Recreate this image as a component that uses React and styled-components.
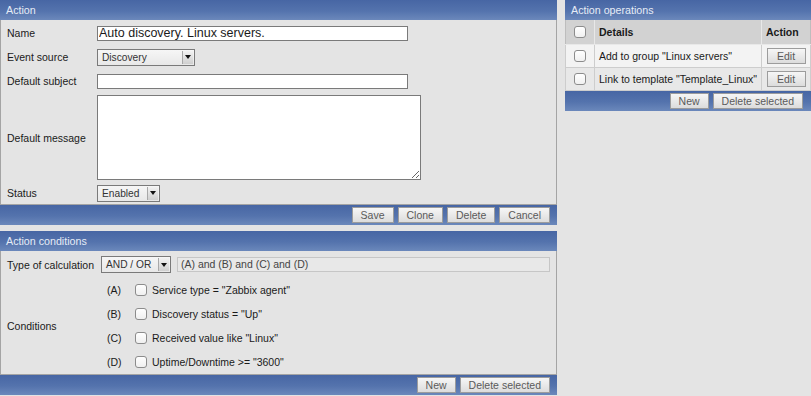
import React from 'react'
import styled, { createGlobalStyle } from 'styled-components'

const GlobalStyle = createGlobalStyle`
  html, body {
    margin: 0;
    padding: 0;
    background: #e4e4e4;
    font-family: "Liberation Sans", Arial, sans-serif;
    font-size: 10.5px;
    color: #1a1a1a;
  }
`

const Page = styled.div`
  display: flex;
  align-items: flex-start;
  gap: 8px;
  width: 811px;
`

const Column = styled.div`
  display: flex;
  flex-direction: column;
  gap: 6px;
  width: ${p => p.width}px;
`

const Panel = styled.div`
  display: flex;
  flex-direction: column;
`

const blueBar = `
  background: linear-gradient(to bottom, #4766a4 0%, #5473ad 55%, #6b88bb 100%);
`

const PanelHeader = styled.div`
  ${blueBar}
  height: 20px;
  line-height: 20px;
  padding-left: 6px;
  color: #e6ecf6;
  font-size: 10.7px;
`

const PanelBody = styled.div`
  background: #e4e4e4;
  border: 1px solid #a4a4a4;
  border-top: none;
  padding-top: ${p => p.pt || 0}px;
`

const PanelFooter = styled.div`
  ${blueBar}
  height: 20px;
  display: flex;
  justify-content: flex-end;
  align-items: center;
  gap: 4px;
  padding-right: ${p => p.pr || 7}px;
`

const Button = styled.button`
  height: 16px;
  padding: 0 8px;
  border: 1px solid #9c9c9c;
  background: linear-gradient(to bottom, #f6f6f6, #dcdcdc);
  color: #5a5a5a;
  font-family: inherit;
  font-size: 10.5px;
  line-height: 14px;
  cursor: pointer;
`

const FormRow = styled.div`
  display: grid;
  grid-template-columns: ${p => p.label}px 1fr;
  align-items: center;
  height: ${p => p.h}px;
  padding-left: 6px;
`

const Label = styled.span`
  font-size: 10.5px;
  white-space: nowrap;
`

const TextInput = styled.input`
  box-sizing: border-box;
  width: ${p => p.w}px;
  height: 15px;
  border: 1px solid #7a7a7a;
  background: #fff;
  padding: 0 1px;
  font-family: inherit;
  font-size: 12.5px;
  color: #1a1a1a;
  outline: none;
`

const TextArea = styled.textarea`
  box-sizing: border-box;
  width: 324px;
  height: 85px;
  border: 1px solid #7a7a7a;
  background: #fff;
  margin: 0;
  display: block;
  font-family: inherit;
  font-size: 12px;
  outline: none;
`

const SelectBox = styled.div`
  box-sizing: border-box;
  width: ${p => p.w}px;
  height: 17px;
  border: 1px solid #7a7a7a;
  background: linear-gradient(to bottom, #f6f6f6, #e8e8e8);
  display: flex;
  align-items: center;
  justify-content: space-between;
  padding-left: 4px;
  color: #333;
  font-size: 10.2px;
`

const Arrow = styled.span`
  width: 10px;
  height: 13px;
  margin-right: 1px;
  background: linear-gradient(to bottom, #f2f2f2, #cfcfcf);
  border-left: 1px solid #a8a8a8;
  display: flex;
  align-items: center;
  justify-content: center;
  &::after {
    content: '';
    border-left: 3px solid transparent;
    border-right: 3px solid transparent;
    border-top: 4px solid #111;
  }
`

const Select = ({ w, children }) => (
  <SelectBox w={w}>
    <span>{children}</span>
    <Arrow />
  </SelectBox>
)

const Checkbox = styled.span`
  display: inline-block;
  box-sizing: border-box;
  width: 12px;
  height: 12px;
  border: 1px solid #8c8c8c;
  border-radius: 3px;
  background: linear-gradient(to bottom, #ffffff, #f0f0f0);
`

const CalcRow = styled.div`
  display: flex;
  align-items: center;
  gap: 6px;
`

const Formula = styled.div`
  box-sizing: border-box;
  width: 373px;
  height: 15px;
  border: 1px solid #c6c6c6;
  background: #e8e8e8;
  color: #444;
  padding-left: 3px;
  line-height: 13px;
`

const CondList = styled.div`
  display: flex;
  flex-direction: column;
`

const CondRow = styled.div`
  display: flex;
  align-items: center;
  height: 24px;
  padding-left: 6px;
`

const CondTag = styled.span`
  width: 28px;
`

const CondText = styled.span`
  margin-left: 5px;
`

const Table = styled.table`
  width: 100%;
  table-layout: fixed;
  border-collapse: collapse;
  font-size: 10.5px;
`

const Th = styled.th`
  height: 24px;
  background: #d2d2d2;
  text-align: left;
  font-weight: bold;
  padding: 0 4px;
  border: 1px solid #e8e8e8;
  border-top: none;
  &:first-child { border-left: 1px solid #bdbdbd; }
  &:last-child { border-right: 1px solid #bdbdbd; }
`

const Tr = styled.tr`
  background: ${p => (p.alt ? '#e8e8e8' : '#f3f3f3')};
`

const Td = styled.td`
  height: 22px;
  padding: 0 4px;
  border: 1px solid #cdcdcd;
  text-align: ${p => p.align || 'left'};
  white-space: nowrap;
  overflow: hidden;
`

const CheckCell = styled.div`
  display: flex;
  justify-content: center;
  align-items: center;
`

const SmallButton = styled(Button)`
  width: 39px;
  padding: 0;
`

const conditions = [
  ['(A)', 'Service type = "Zabbix agent"'],
  ['(B)', 'Discovery status = "Up"'],
  ['(C)', 'Received value like "Linux"'],
  ['(D)', 'Uptime/Downtime >= "3600"'],
]

const operations = ['Add to group "Linux servers"', 'Link to template "Template_Linux"']

export default function App() {
  return (
    <Page>
      <GlobalStyle />
      <Column width={557}>
        <Panel>
          <PanelHeader>Action</PanelHeader>
          <PanelBody pt={1}>
            <FormRow label={90} h={24}>
              <Label>Name</Label>
              <TextInput w={311} defaultValue="Auto discovery. Linux servers." />
            </FormRow>
            <FormRow label={90} h={24}>
              <Label>Event source</Label>
              <Select w={98}>Discovery</Select>
            </FormRow>
            <FormRow label={90} h={24}>
              <Label>Default subject</Label>
              <TextInput w={311} defaultValue="" />
            </FormRow>
            <FormRow label={90} h={89}>
              <Label>Default message</Label>
              <TextArea defaultValue="" />
            </FormRow>
            <FormRow label={90} h={22}>
              <Label>Status</Label>
              <Select w={63}>Enabled</Select>
            </FormRow>
          </PanelBody>
          <PanelFooter>
            <Button>Save</Button>
            <Button>Clone</Button>
            <Button>Delete</Button>
            <Button>Cancel</Button>
          </PanelFooter>
        </Panel>

        <Panel>
          <PanelHeader>Action conditions</PanelHeader>
          <PanelBody>
            <FormRow label={94} h={27}>
              <Label>Type of calculation</Label>
              <CalcRow>
                <Select w={70}>AND / OR</Select>
                <Formula>(A) and (B) and (C) and (D)</Formula>
              </CalcRow>
            </FormRow>
            <FormRow label={94} h={96}>
              <Label>Conditions</Label>
              <CondList>
                {conditions.map(([tag, text]) => (
                  <CondRow key={tag}>
                    <CondTag>{tag}</CondTag>
                    <Checkbox />
                    <CondText>{text}</CondText>
                  </CondRow>
                ))}
              </CondList>
            </FormRow>
          </PanelBody>
          <PanelFooter>
            <Button>New</Button>
            <Button>Delete selected</Button>
          </PanelFooter>
        </Panel>
      </Column>

      <Column width={246}>
        <Panel>
          <PanelHeader>Action operations</PanelHeader>
          <Table>
            <colgroup>
              <col style={{ width: 29 }} />
              <col />
              <col style={{ width: 49 }} />
            </colgroup>
            <thead>
              <tr>
                <Th>
                  <CheckCell><Checkbox /></CheckCell>
                </Th>
                <Th>Details</Th>
                <Th>Action</Th>
              </tr>
            </thead>
            <tbody>
              {operations.map((op, i) => (
                <Tr key={op} alt={i % 2 === 1}>
                  <Td>
                    <CheckCell><Checkbox /></CheckCell>
                  </Td>
                  <Td>{op}</Td>
                  <Td align="center">
                    <SmallButton>Edit</SmallButton>
                  </Td>
                </Tr>
              ))}
            </tbody>
          </Table>
          <PanelFooter pr={8}>
            <Button>New</Button>
            <Button>Delete selected</Button>
          </PanelFooter>
        </Panel>
      </Column>
    </Page>
  )
}
